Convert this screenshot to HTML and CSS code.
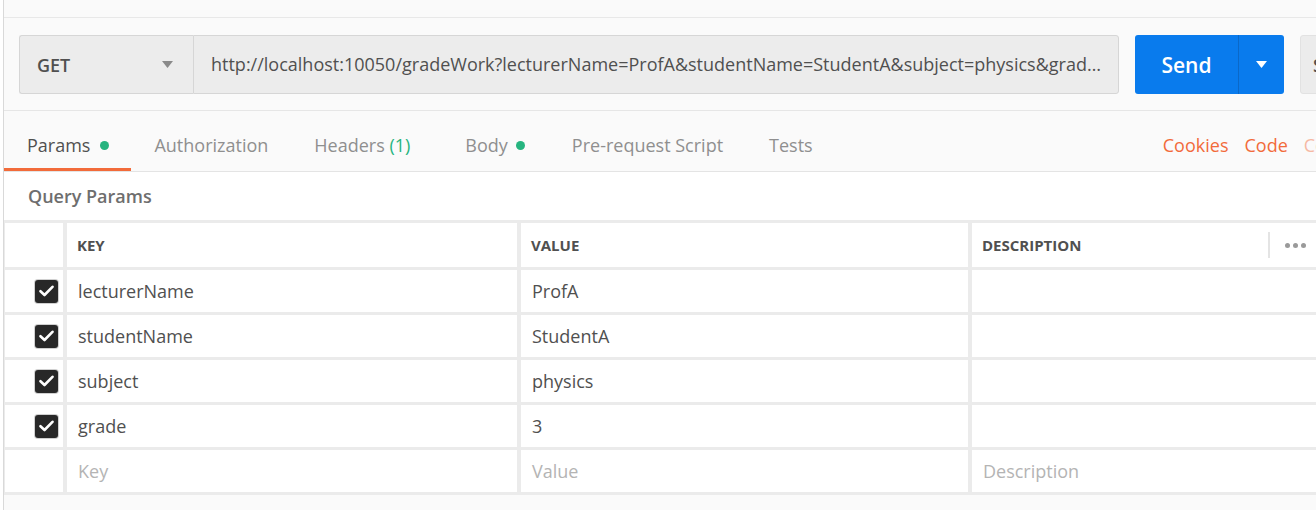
FILE: index.html
```html
<!DOCTYPE html>
<html>
<head>
<meta charset="utf-8">
<link rel="stylesheet" href="styles.css">
</head>
<body>
<div class="app">
  <div class="top-strip"></div>
  <div class="request-bar">
    <div class="method">GET
      <svg class="caret" width="11" height="7" viewBox="0 0 11 7"><path d="M0 0H11L5.5 7Z" fill="#8a8a8a"/></svg>
    </div>
    <div class="url">http://localhost:10050/gradeWork?lecturerName=ProfA&amp;studentName=StudentA&amp;subject=physics&amp;grade=3</div>
    <div class="send-group">
      <div class="send">Send</div>
      <div class="send-drop"><svg width="11" height="7" viewBox="0 0 11 7"><path d="M0 0H11L5.5 7Z" fill="#ffffff"/></svg></div>
    </div>
    <div class="save">Save</div>
  </div>
  <div class="tabs">
    <div class="tab active">Params <span class="dot"></span></div>
    <div class="tab">Authorization</div>
    <div class="tab headers">Headers&nbsp;<span class="count">(1)</span></div>
    <div class="tab body-tab">Body <span class="dot small-gap"></span></div>
    <div class="tab">Pre-request Script</div>
    <div class="tab">Tests</div>
    <div class="spacer"></div>
    <div class="links">
      <span class="link">Cookies</span>
      <span class="link">Code</span>
      <span class="link faded">Comments (0)</span>
    </div>
  </div>
  <div class="params">
    <div class="section-title">Query Params</div>
    <div class="grid">
      <div class="cell"></div>
      <div class="cell head">KEY</div>
      <div class="cell head">VALUE</div>
      <div class="cell head desc-head"><span>DESCRIPTION</span>
        <span class="more"><span class="sep"></span><span class="dots"><i></i><i></i><i></i></span></span>
      </div>

      <div class="cell check"><span class="box"><svg width="15" height="12" viewBox="0 0 15 12"><path d="M1.5 6.2L5.5 10L13.5 1.8" fill="none" stroke="#fff" stroke-width="2.6" stroke-linecap="round" stroke-linejoin="round"/></svg></span></div>
      <div class="cell">lecturerName</div>
      <div class="cell">ProfA</div>
      <div class="cell"></div>

      <div class="cell check"><span class="box"><svg width="15" height="12" viewBox="0 0 15 12"><path d="M1.5 6.2L5.5 10L13.5 1.8" fill="none" stroke="#fff" stroke-width="2.6" stroke-linecap="round" stroke-linejoin="round"/></svg></span></div>
      <div class="cell">studentName</div>
      <div class="cell">StudentA</div>
      <div class="cell"></div>

      <div class="cell check"><span class="box"><svg width="15" height="12" viewBox="0 0 15 12"><path d="M1.5 6.2L5.5 10L13.5 1.8" fill="none" stroke="#fff" stroke-width="2.6" stroke-linecap="round" stroke-linejoin="round"/></svg></span></div>
      <div class="cell">subject</div>
      <div class="cell">physics</div>
      <div class="cell"></div>

      <div class="cell check"><span class="box"><svg width="15" height="12" viewBox="0 0 15 12"><path d="M1.5 6.2L5.5 10L13.5 1.8" fill="none" stroke="#fff" stroke-width="2.6" stroke-linecap="round" stroke-linejoin="round"/></svg></span></div>
      <div class="cell">grade</div>
      <div class="cell">3</div>
      <div class="cell"></div>

      <div class="cell"></div>
      <div class="cell placeholder">Key</div>
      <div class="cell placeholder">Value</div>
      <div class="cell placeholder">Description</div>
    </div>
  </div>
</div>
</body>
</html>
```
FILE: styles.css
```css
html, body {
  margin: 0;
  padding: 0;
}
body {
  width: 1316px;
  height: 510px;
  overflow: hidden;
  background: #ffffff;
  font-family: "Open Sans", "Liberation Sans", sans-serif;
  color: #505050;
}
.app {
  margin-left: 3px;
  border-left: 1px solid #d9d9d9;
  background: #fafafa;
  height: 510px;
  overflow: hidden;
}
.top-strip {
  height: 17px;
  border-bottom: 1px solid #e8e8e8;
}
.request-bar {
  display: flex;
  height: 59px;
  padding: 17px 0 16px 15px;
  border-bottom: 1px solid #e6e6e6;
}
.method {
  flex: none;
  width: 174px;
  box-sizing: border-box;
  display: flex;
  align-items: center;
  justify-content: space-between;
  padding: 0 20px 0 17px;
  background: #ececec;
  border: 1px solid #d6d6d6;
  border-right: none;
  border-radius: 3px 0 0 3px;
  font-size: 18px;
  font-weight: 600;
  color: #505050;
}
.url {
  flex: none;
  width: 926px;
  box-sizing: border-box;
  padding: 0 14px 0 17px;
  background: #ececec;
  border: 1px solid #d6d6d6;
  border-radius: 0 3px 3px 0;
  font-size: 18px;
  line-height: 57px;
  color: #505050;
  white-space: nowrap;
  overflow: hidden;
  text-overflow: ellipsis;
}
.send-group {
  flex: none;
  display: flex;
  margin-left: 16px;
  background: #097bed;
  border-radius: 3px;
}
.send {
  width: 104px;
  box-sizing: border-box;
  display: flex;
  align-items: center;
  justify-content: center;
  border-right: 1px solid #0a68c8;
  color: #ffffff;
  font-size: 21px;
  font-weight: 600;
}
.send-drop {
  width: 45px;
  display: flex;
  align-items: center;
  justify-content: center;
}
.save {
  flex: none;
  width: 100px;
  margin-left: 16px;
  box-sizing: border-box;
  padding-left: 12px;
  display: flex;
  align-items: center;
  background: #ececec;
  border: 1px solid #e2e2e2;
  border-radius: 3px;
  font-size: 18px;
  font-weight: 600;
  color: #505050;
}
.tabs {
  display: flex;
  height: 60px;
  border-bottom: 1px solid #e4e4e4;
}
.tab {
  box-sizing: border-box;
  display: flex;
  align-items: center;
  padding: 11px 23px 0 23px;
  border-bottom: 3px solid transparent;
  font-size: 18px;
  color: #8f8f8f;
  white-space: nowrap;
}
.tab.active {
  color: #505050;
  border-bottom-color: #f26b3a;
  padding-right: 22px;
}
.tab.headers {
  padding-right: 32px;
}
.tab.body-tab {
  padding-right: 24px;
}
.dot {
  display: inline-block;
  width: 9px;
  height: 9px;
  margin-left: 10px;
  border-radius: 50%;
  background: #26b47f;
}
.dot.small-gap {
  margin-left: 8px;
}
.count {
  color: #26b47f;
}
.spacer {
  flex: 1;
}
.links {
  display: flex;
  align-items: center;
  padding-top: 11px;
  padding-bottom: 3px;
  gap: 16px;
  font-size: 18px;
  color: #f26b3a;
  white-space: nowrap;
  margin-right: -105px;
}
.link.faded {
  opacity: 0.45;
}
.params {
  background: #ffffff;
}
.section-title {
  height: 48px;
  line-height: 48px;
  padding-left: 24px;
  font-size: 18px;
  font-weight: 600;
  color: #6e6e6e;
}
.grid {
  display: grid;
  grid-template-columns: 58px 450px 447px 1fr;
  grid-template-rows: 44px repeat(5, 42px);
  column-gap: 4px;
  row-gap: 3px;
  padding: 3px 0 3px 1px;
  background: #ebebeb;
}
.cell {
  background: #ffffff;
  display: flex;
  align-items: center;
  padding-left: 11px;
  font-size: 18px;
  color: #505050;
  white-space: nowrap;
  overflow: hidden;
}
.cell.head {
  padding-left: 10px;
  font-size: 15px;
  font-weight: 700;
  color: #505050;
}
.desc-head {
  justify-content: space-between;
}
.more {
  display: flex;
  align-items: center;
  height: 100%;
  width: 48px;
}
.sep {
  width: 2px;
  height: 26px;
  background: #e4e4e4;
}
.dots {
  display: flex;
  gap: 3px;
  margin-left: 15px;
}
.dots i {
  width: 5px;
  height: 5px;
  border-radius: 50%;
  background: #9a9a9a;
}
.cell.check {
  justify-content: flex-end;
  padding-left: 0;
  padding-right: 5px;
}
.box {
  width: 23px;
  height: 23px;
  border-radius: 3px;
  background: #282828;
  box-shadow: 0 0 0 1px #d0d0d0;
  display: flex;
  align-items: center;
  justify-content: center;
}
.cell.placeholder {
  color: #b4b4b4;
}
```
